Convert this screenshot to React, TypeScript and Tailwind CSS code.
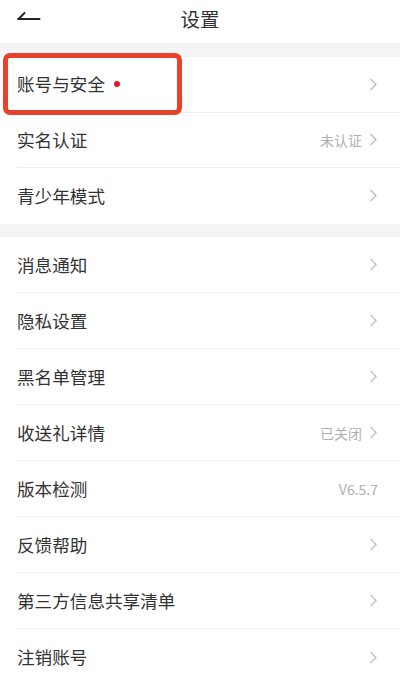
import React from "react";

const font = { fontFamily: '"Noto Sans CJK SC", "Noto Sans", sans-serif' };

function Chevron() {
  return (
    <svg width="9" height="13" viewBox="0 0 9 13" className="shrink-0">
      <path d="M1.5 1 L7 6.5 L1.5 12" fill="none" stroke="#c2c2c2" strokeWidth="1.4" />
    </svg>
  );
}

type Row = { label: string; value?: string; chevron?: boolean; dot?: boolean };

function Item({ row, last, tall }: { row: Row; last?: boolean; tall?: boolean }) {
  return (
    <div className="pl-[17px] bg-white">
      <div
        className={
          (tall ? "h-[56px] " : "h-[55.5px] ") +
          "flex items-center pr-[22px] " +
          (last ? "" : "border-b border-[#efefef]")
        }
      >
        <span className="text-[17.6px] text-[#333333] leading-none">{row.label}</span>
        {row.dot && <span className="ml-[9px] w-[6px] h-[6px] rounded-full bg-[#e5162b]" />}
        <div className="ml-auto flex items-center gap-[7px]">
          {row.value && (
            <span className="text-[14px] text-[#b0b0b0] leading-none">{row.value}</span>
          )}
          {row.chevron !== false && <Chevron />}
        </div>
      </div>
    </div>
  );
}

export default function App() {
  const s1: Row[] = [
    { label: "账号与安全", dot: true },
    { label: "实名认证", value: "未认证" },
    { label: "青少年模式" },
  ];
  const s2: Row[] = [
    { label: "消息通知" },
    { label: "隐私设置" },
    { label: "黑名单管理" },
    { label: "收送礼详情", value: "已关闭" },
    { label: "版本检测", value: "V6.5.7", chevron: false },
    { label: "反馈帮助" },
    { label: "第三方信息共享清单" },
    { label: "注销账号" },
  ];
  return (
    <div className="relative w-[400px] h-[679px] overflow-hidden bg-white" style={font}>
      <div className="h-[43px] relative flex items-center justify-center pb-[6px]">
        <svg width="24" height="10" viewBox="0 0 24 10" className="absolute left-[17px] top-[11px]">
          <path d="M1 8 L22.5 8 M1.5 8 L7.5 2" fill="none" stroke="#222" strokeWidth="2" strokeLinecap="round" />
        </svg>
        <span className="text-[19.5px] text-[#333333] leading-none">设置</span>
      </div>
      <div className="h-[14px] bg-[#f4f4f4]" />
      {s1.map((r, i) => (
        <Item key={r.label} row={r} last={i === s1.length - 1} />
      ))}
      <div className="h-[13.5px] bg-[#f4f4f4]" />
      {s2.map((r, i) => (
        <Item key={r.label} row={r} tall last={i === s2.length - 1} />
      ))}
      <div className="absolute left-[3px] top-[53px] w-[179px] h-[62px] border-[5px] border-[#e8412c] rounded-[7px]" />
    </div>
  );
}
